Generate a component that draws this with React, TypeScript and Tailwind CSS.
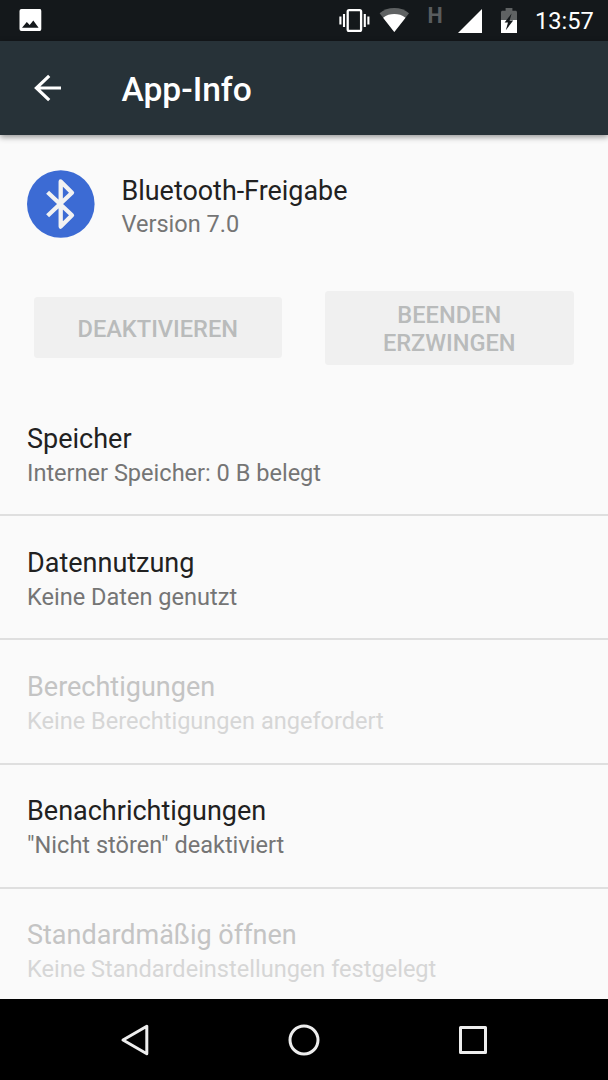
import * as React from "react";
import { clsx } from "clsx";

type Preference = { title: string; summary: string; disabled?: boolean };

const PREFERENCES: Preference[] = [
  { title: "Speicher", summary: "Interner Speicher: 0 B belegt" },
  { title: "Datennutzung", summary: "Keine Daten genutzt" },
  { title: "Berechtigungen", summary: "Keine Berechtigungen angefordert", disabled: true },
  { title: "Benachrichtigungen", summary: "\"Nicht stören\" deaktiviert" },
  { title: "Standardmäßig öffnen", summary: "Keine Standardeinstellungen festgelegt", disabled: true },
];

function StatusBar() {
  return (
    <header className="flex h-[40.5px] shrink-0 items-start bg-[#14181b] pl-[19px] text-white">
      <svg className="mt-[9px] h-[22px] w-[23px]" viewBox="0 0 23 22" fill="currentColor">
        <path fillRule="evenodd" d="M2.5 0H20a2 2 0 0 1 2.3 2V20a2 2 0 0 1-2.3 2H2.5a2 2 0 0 1-2-2V2a2 2 0 0 1 2-2ZM3 18.7H19.6L14.3 11.5 10.7 16 7.8 13Z" />
      </svg>

      <div className="ml-auto flex items-start">
        {/* vibrate */}
        <svg className="mt-[8px] h-[25px] w-[31px]" viewBox="0 0 31 25" fill="none" stroke="currentColor" strokeWidth="2.1">
          <rect x="8.7" y="2.1" width="13.4" height="20.8" rx="1.4" strokeWidth="2.3" />
          <path d="M5 6v13M25.8 6v13M1.4 8.4v8.2M29.4 8.4v8.2" />
        </svg>
        {/* wifi */}
        <svg className="ml-[9px] mt-[8px] h-[25px] w-[31px]" viewBox="0 0 31 25">
          <path fill="#5f6263" d="M.6 5.2C4.5 1.8 9.5 0 15.3 0S26.1 1.8 30 5.2L15.3 24Z" />
          <path fill="currentColor" d="M4.1 9.7C7.5 7.2 11.2 6.1 15.3 6.1S23.1 7.2 26.5 9.7L15.3 24Z" />
        </svg>
        <span className="ml-[17.5px] mt-[4px] w-[15px] text-[21.5px] leading-6 font-bold text-[#595c5e]">H</span>
        {/* signal strength */}
        <svg className="ml-[15.5px] mt-[9px] h-6 w-6" viewBox="0 0 24 24" fill="currentColor">
          <path d="M24 0v24H0Z" />
        </svg>
        {/* charging battery */}
        <svg className="ml-[19px] mt-[8px] h-[25px] w-[16px]" viewBox="0 0 16 25">
          <path fill="#5f6263" d="M0 12V4.5C0 3.3.5 2.8 1.6 2.8H4.6V0H11.4V2.8H14.4C15.5 2.8 16 3.3 16 4.5V12Z" />
          <path fill="currentColor" d="M0 12H16V25H0Z" />
          <path fill="#14181b" d="M10.6 5.6 3.6 14.4H7L4.8 22.2 12.2 12.6H8.6Z" />
        </svg>
        <time className="ml-[18px] mt-[7px] w-[73px] text-[23.64px] leading-7">13:57</time>
      </div>
    </header>
  );
}

function Toolbar() {
  return (
    <div className="relative z-10 flex h-[94.5px] shrink-0 items-center bg-[#273238] pl-[33.5px] text-white shadow-[0_2px_6px_rgba(0,0,0,0.42)]">
      <button aria-label="Zurück">
        <svg className="h-7 w-7" viewBox="0 0 28 28" fill="none" stroke="currentColor" strokeWidth="3.2">
          <path d="M27 14H3M15.2 1.8 2.4 14 15.2 26.2" />
        </svg>
      </button>
      <h1 className="ml-[60px] pt-[4px] text-[33.6px] leading-10 font-medium">App-Info</h1>
    </div>
  );
}

function AppHeader() {
  return (
    <section className="flex pl-[27px] pt-[35px]">
      <svg className="size-[68px]" viewBox="0 0 68 68" fill="none">
        <circle cx="33.8" cy="34" r="33.8" fill="#3c6bd4" />
        <path d="M20.6 22.2 45 45.2 33.7 56.6V11.4L45 22.8 20.6 45.8" stroke="#f2f2f2" strokeWidth="4.3" strokeLinejoin="round" />
      </svg>
      <div className="ml-[26.5px] pt-[4.5px]">
        <h2 className="text-[26.9px] leading-8 text-[#212121]">Bluetooth-Freigabe</h2>
        <p className="mt-px text-[23.54px] leading-8 text-[#757575]">Version 7.0</p>
      </div>
    </section>
  );
}

function DisabledButton({ children, className }: { children: React.ReactNode; className?: string }) {
  return (
    <button
      disabled
      className={clsx(
        "w-[248.5px] rounded-[3.5px] bg-[#f0f0f0] pt-[4px] text-[23.6px] leading-[27.7px] font-medium text-[#b9bbbb]",
        className,
      )}
    >
      {children}
    </button>
  );
}

function PreferenceRow({ title, summary, disabled }: Preference) {
  return (
    <li className="h-[124.2px] shrink-0 border-b-2 border-[#dfdfdf] pl-[27px] pt-[30.6px]">
      <h3 className={clsx("text-[27px] leading-8", disabled ? "text-[#c4c4c4]" : "text-[#212121]")}>{title}</h3>
      <p className={clsx("mt-[2px] text-[23.56px] leading-8", disabled ? "text-[#d6d6d6]" : "text-[#757575]")}>{summary}</p>
    </li>
  );
}

function NavigationBar() {
  return (
    <nav className="flex h-[81px] shrink-0 items-center justify-center gap-[137px] bg-black text-[#ededed]">
      <button aria-label="Zurück">
        <svg className="size-8" viewBox="0 0 32 32" fill="none" stroke="currentColor" strokeWidth="3" strokeLinejoin="round">
          <path d="M27.8 2.2V29.8L4 16Z" />
        </svg>
      </button>
      <button aria-label="Startseite">
        <svg className="size-8" viewBox="0 0 32 32" fill="none" stroke="currentColor" strokeWidth="3">
          <circle cx="16" cy="16" r="14" />
        </svg>
      </button>
      <button aria-label="Übersicht">
        <svg className="size-8" viewBox="0 0 32 32" fill="none" stroke="currentColor" strokeWidth="3" strokeLinejoin="round">
          <path d="M3.5 3.5H28.5V28.5H3.5Z" />
        </svg>
      </button>
    </nav>
  );
}

export default function App() {
  return (
    <div className="flex h-[1080px] w-[608px] flex-col overflow-hidden bg-[#fafafa] font-[Roboto,sans-serif]">
      <StatusBar />
      <Toolbar />
      <main className="flex min-h-0 flex-1 flex-col overflow-hidden">
        <AppHeader />
        <div className="mt-[51.6px] flex h-[73.5px] shrink-0 items-center gap-[43px] pl-[33.5px]">
          <DisabledButton className="h-[61px]">DEAKTIVIEREN</DisabledButton>
          <DisabledButton className="h-[73.5px] px-10">BEENDEN ERZWINGEN</DisabledButton>
        </div>
        <ul className="mt-[27.4px] flex flex-col">
          {PREFERENCES.map((pref) => (
            <PreferenceRow key={pref.title} {...pref} />
          ))}
        </ul>
      </main>
      <NavigationBar />
    </div>
  );
}
